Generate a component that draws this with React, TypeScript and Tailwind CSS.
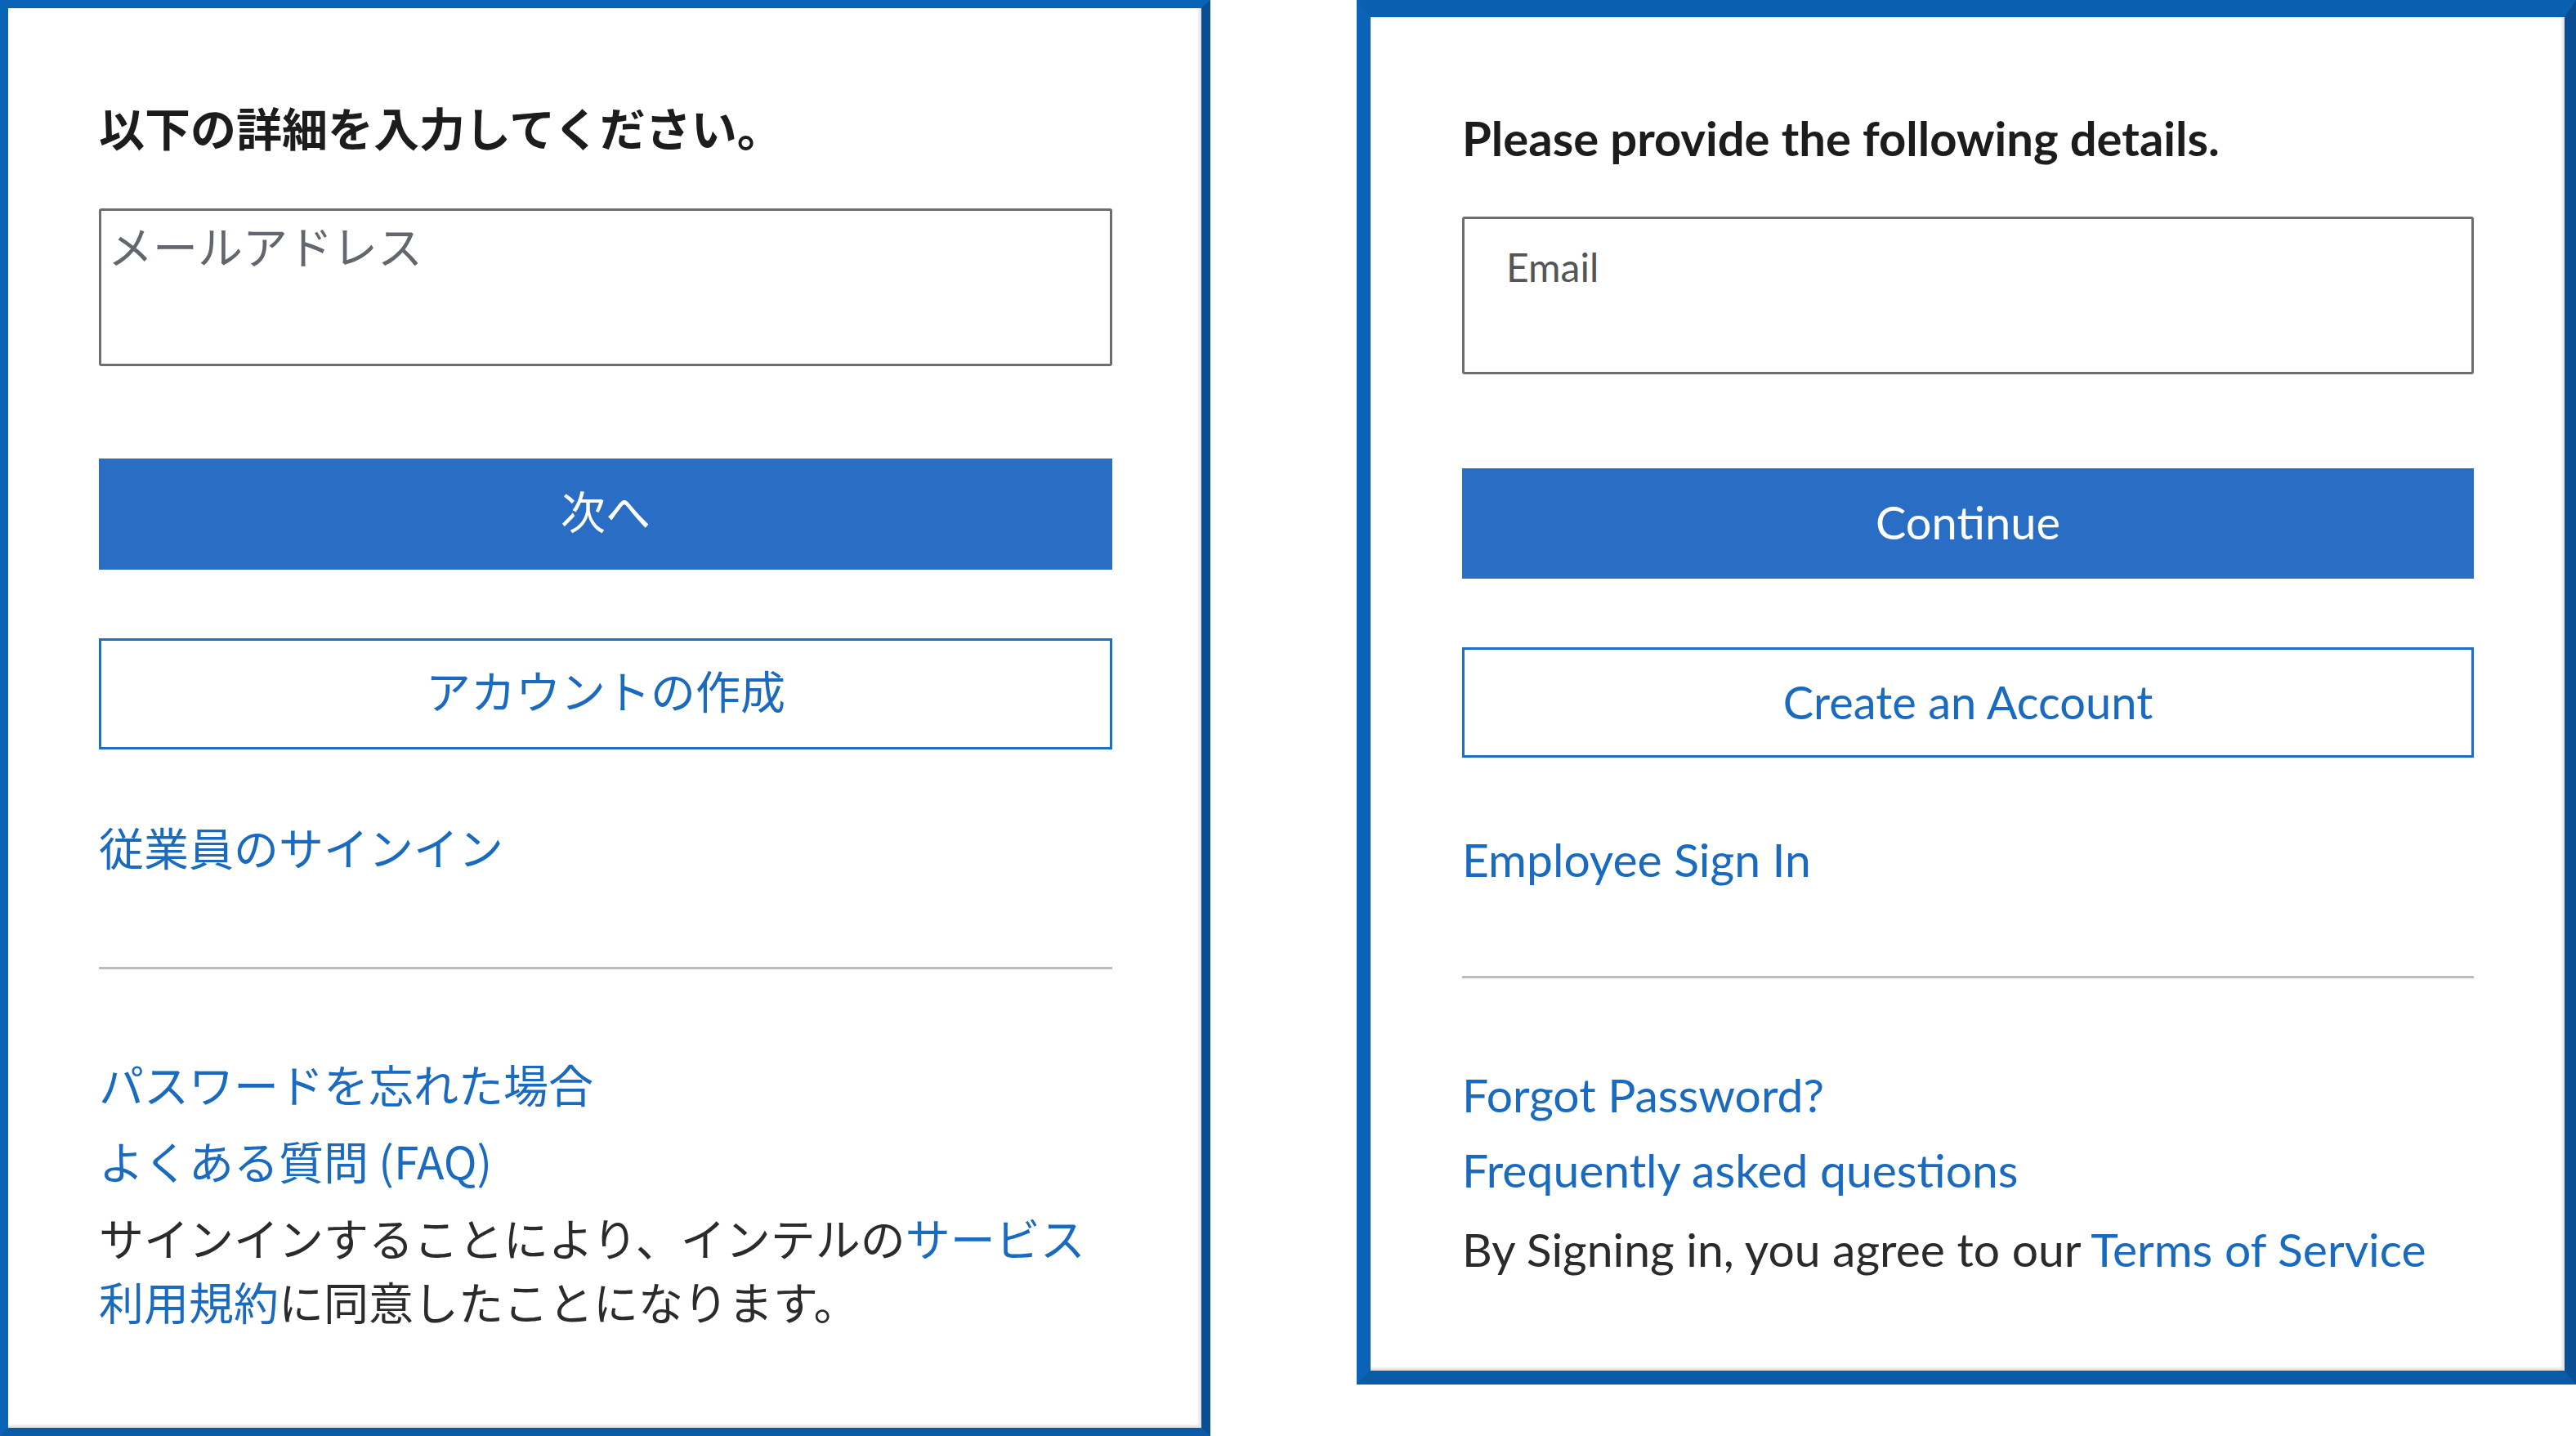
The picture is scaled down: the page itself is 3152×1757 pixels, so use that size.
export default function App() {
  return (
    <div className="flex items-start w-[3152px] h-[1757px] bg-white">
      {/* Japanese panel */}
      <div className="w-[1481px] h-[1757px] shrink-0 box-border border-l-[10px] border-t-[10px] border-r-[11px] border-b-[10px] border-l-[#0a63b6] border-t-[#0a63b6] border-r-[#094e92] border-b-[#0a5aa6] bg-white shadow-[inset_-3px_-3px_3px_rgba(0,0,0,0.12)]">
        <div
          className="pl-[111px] pt-[113px] w-[1351px] text-[55px] text-[#2b2b2b]"
          style={{ fontFamily: '"Noto Sans CJK JP", "Noto Sans", sans-serif' }}
        >
          <h1 className="text-[56px] font-bold leading-[64px] text-[#1c1c1c]">以下の詳細を入力してください。</h1>
          <div className="mt-[68px] h-[193px] box-border border-[3px] border-[#6e6e6e] rounded-[3px] pl-[8px] pt-0">
            <span className="leading-[64px] text-[#62666d]">メールアドレス</span>
          </div>
          <button className="mt-[113px] flex items-center justify-center w-full h-[136px] pb-[12px] bg-[#2a6dc5] text-white leading-[64px]">
            次へ
          </button>
          <button className="mt-[84px] flex items-center justify-center w-full h-[136px] pb-[12px] box-border border-[3px] border-[#1e6ec4] bg-white text-[#1a6bbf] leading-[64px]">
            アカウントの作成
          </button>
          <a className="block mt-[86px] leading-[64px] text-[#1a6bbf]">従業員のサインイン</a>
          <div className="mt-[116px] h-[3px] bg-[#bcbcbc]" />
          <a className="block mt-[92px] leading-[94px] text-[#1a6bbf]">パスワードを忘れた場合</a>
          <a className="block leading-[94px] text-[#1a6bbf]">よくある質問 (FAQ)</a>
          <p className="mt-[8px] leading-[78px]">
            サインインすることにより、インテルの<a className="text-[#1a6bbf]">サービス</a>
            <br />
            <a className="text-[#1a6bbf]">利用規約</a>に同意したことになります。
          </p>
        </div>
      </div>

      {/* English panel */}
      <div className="ml-[179px] w-[1492px] h-[1694px] shrink-0 box-border border-l-[17px] border-t-[21px] border-r-[14px] border-b-[17px] border-l-[#0a63b6] border-t-[#0a5fb0] border-r-[#094e92] border-b-[#0a5aa6] bg-white shadow-[inset_-3px_-3px_3px_rgba(0,0,0,0.12)]">
        <div
          className="pl-[112px] pt-[116px] w-[1350px] text-[56px] text-[#2b2b2b]"
          style={{ fontFamily: 'Lato, "Noto Sans", sans-serif' }}
        >
          <h1 className="text-[58px] font-bold leading-[64px] text-[#1c1c1c]">Please provide the following details.</h1>
          <div className="mt-[64px] h-[193px] box-border border-[3px] border-[#6e6e6e] rounded-[3px] pl-[51px] pt-[14px]">
            <span className="text-[48px] leading-[64px] text-[#555555]">Email</span>
          </div>
          <button className="mt-[115px] flex items-center justify-center w-full h-[135px] pb-[4px] bg-[#2a6dc5] text-white leading-[64px]">
            Continue
          </button>
          <button className="mt-[84px] flex items-center justify-center w-full h-[135px] pb-[2px] box-border border-[3px] border-[#1e6ec4] bg-white text-[#1a6bbf] leading-[64px]">
            Create an Account
          </button>
          <a className="block mt-[92px] text-[57px] leading-[64px] text-[#1a6bbf]">Employee Sign In</a>
          <div className="mt-[111px] h-[3px] bg-[#bcbcbc]" />
          <a className="block mt-[96px] text-[57px] leading-[92px] text-[#1a6bbf]">Forgot Password?</a>
          <a className="block text-[57px] leading-[92px] text-[#1a6bbf]">Frequently asked questions</a>
          <p className="mt-[5px] text-[57px] leading-[92px]">
            By Signing in, you agree to our <a className="text-[#1a6bbf]">Terms of Service</a>
          </p>
        </div>
      </div>
    </div>
  );
}
